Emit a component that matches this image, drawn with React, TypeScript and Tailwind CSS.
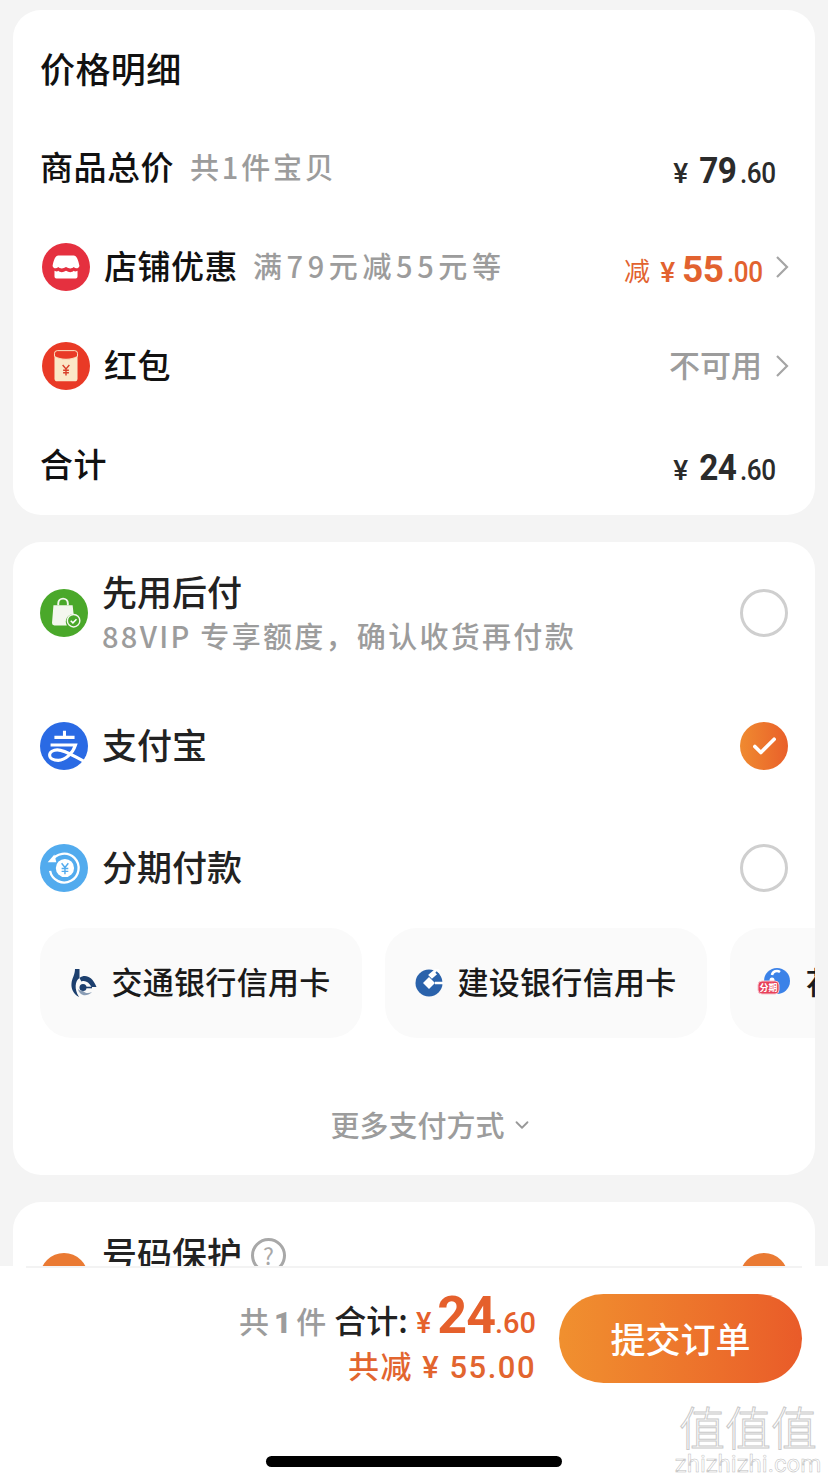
import React from 'react'
import { ChevronDown, Check } from 'lucide-react'

const cjk = "font-['Noto_Sans_CJK_SC',sans-serif]"
const num = "font-['Roboto','Noto_Sans_CJK_SC',sans-serif]"

function Price({ whole, cents, tone, wide }: { whole: string; cents: string; tone: string; wide?: boolean }) {
  return (
    <span className={`${num} ${tone} flex items-baseline pt-[6px]`}>
      <span className="text-[28px] font-medium mr-[7px]">¥</span>
      <span className={wide ? 'text-[37px] font-bold tracking-[-0.5px] origin-right' : 'text-[37px] font-bold tracking-[-0.5px] scale-x-90 origin-right'}>{whole}</span>
      <span className="text-[29px] font-medium tracking-[-0.5px] scale-x-90 origin-right">.{cents}</span>
    </span>
  )
}

function Chevron() {
  return (
    <svg width="14" height="24" viewBox="0 0 14 24" className="shrink-0">
      <path d="M2 2l10 10L2 22" stroke="#a5a5a5" strokeWidth="2.200" fill="none" />
    </svg>
  )
}

function ShopIcon() {
  return (
    <svg width="48" height="48" viewBox="0 0 50 50" className="shrink-0 ml-[2px]">
      <circle cx="25" cy="25" r="25" fill="#e5303f" />
      <path d="M17 13h16c3 0 5 5 6 11-1 3-4 3-6 1-2 2-5 2-8 0-3 2-6 2-8 0-2 2-5 2-6-1 1-6 3-11 6-11z" fill="#fff" />
      <path d="M13 29c2 1 3 1 4 0 2 2 5 2 8 0 3 2 6 2 8 0 1 1 2 1 4 0v6a2 2 0 0 1-2 2H15a2 2 0 0 1-2-2z" fill="#fff" />
    </svg>
  )
}

function EnvelopeIcon() {
  return (
    <svg width="48" height="48" viewBox="0 0 50 50" className="shrink-0 ml-[2px]">
      <circle cx="25" cy="25" r="25" fill="#e93a26" />
      <rect x="13" y="9" width="24" height="32" rx="3" fill="#fbe7c6" />
      <path d="M13 12a3 3 0 0 1 3-3h18a3 3 0 0 1 3 3v3c-7 4-17 4-24 0z" fill="#e93a26" stroke="#fbe7c6" strokeWidth="1" />
      <path d="M21.500 24l3.500 4 3.500-4M25 28v7M22 29.500h6M22 32h6" stroke="#d8402a" strokeWidth="1.500" fill="none" />
    </svg>
  )
}

function BagIcon() {
  return (
    <svg width="48" height="48" viewBox="0 0 50 50" className="shrink-0">
      <circle cx="25" cy="25" r="25" fill="#4aa82a" />
      <path d="M14 17h20l1 9a8 8 0 0 0-7 12H15a2.500 2.500 0 0 1-2.500-2.500z" fill="#f4f7ee" />
      <path d="M19 17v-2a5 5 0 0 1 10 0v2" stroke="#f4f7ee" strokeWidth="2" fill="none" />
      <circle cx="35" cy="33" r="6.500" fill="#4aa82a" stroke="#f4f7ee" strokeWidth="1.500" />
      <path d="M32 33l2.300 2.300 3.700-3.800" stroke="#fff" strokeWidth="1.600" fill="none" />
    </svg>
  )
}

function AlipayIcon() {
  return (
    <svg width="48" height="48" viewBox="0 0 50 50" className="shrink-0">
      <circle cx="25" cy="25" r="25" fill="#2a6ae4" />
      <path d="M15 16h21M25.500 9v7M11 24h26c-3 9-11 16-18 16-5 0-9-2-9-5.500 0-3.500 4-5.500 8-5.500 8 0 16 6 30 13" stroke="#fff" strokeWidth="3.200" fill="none" />
    </svg>
  )
}

function InstallmentIcon() {
  return (
    <svg width="48" height="48" viewBox="0 0 50 50" className="shrink-0">
      <circle cx="25" cy="25" r="25" fill="#52abee" />
      <path d="M12 18a15 15 0 1 1-1.500 10" stroke="#fff" strokeWidth="2.400" fill="none" />
      <path d="M8 19h9l-2-8z" fill="#fff" />
      <circle cx="26" cy="25" r="9.500" fill="#fff" />
      <path d="M22.500 20l3.500 4.500 3.500-4.500M26 24.500v7M22.500 25.500h7M22.500 28.500h7" stroke="#52abee" strokeWidth="1.500" fill="none" />
    </svg>
  )
}

function CommBankIcon() {
  return (
    <svg width="26" height="30" viewBox="0 0 26 30" className="shrink-0">
      <path d="M4 1h4.500v9C4 13 3 21 8 29 2 26 0 20 .5 15.500 1 10 4 7 4 1z" fill="#1c3f6e" />
      <path d="M8.500 10C14 6 21 8 25.500 19H20.500C18 14 14 12 10.500 13.500 9.500 12 9 11 8.500 10z" fill="#1c3f6e" />
      <circle cx="12" cy="19.500" r="3.500" fill="#1c3f6e" />
      <path d="M14 19.500h7" stroke="#1c3f6e" strokeWidth="1.600" />
      <path d="M7 21c1 6 8 9 14 3-4 2-7 1-9-1-2 0-4-1-5-2z" fill="#8a9db5" />
    </svg>
  )
}

function CcbIcon() {
  return (
    <svg width="28" height="28" viewBox="0 0 28 28" className="shrink-0">
      <circle cx="14" cy="14" r="13.500" fill="#2a62ab" />
      <path d="M14 8l6 6-6 6-6-6z" fill="#fff" />
      <path d="M15 6L22 0l2 2-7 6zM20 14h8" stroke="#fff" strokeWidth="2.500" fill="#fff" />
      <path d="M21 3l3 3" stroke="#2a62ab" strokeWidth="2" />
    </svg>
  )
}

function HuabeiIcon() {
  return (
    <svg width="34" height="32" viewBox="0 0 34 32" className="shrink-0">
      <circle cx="20" cy="14" r="13" fill="#3b82e8" />
      <path d="M15 8a5 5 0 0 1 8-3" stroke="#fff" strokeWidth="2.500" fill="none" />
      <circle cx="15" cy="13" r="2.500" fill="#fff" />
      <rect x="1" y="14" width="21" height="13" rx="4" fill="#e8415a" stroke="#f7c4cc" strokeWidth="1" />
      <text x="11.500" y="24" fontSize="9" fontWeight="700" fill="#fff" textAnchor="middle">分期</text>
    </svg>
  )
}

function Radio({ checked }: { checked?: boolean }) {
  if (checked) {
    return (
      <span className="w-[48px] h-[48px] rounded-full bg-gradient-to-r from-[#ef8a30] to-[#e95f2a] flex items-center justify-center">
        <Check size={29} color="#fff" strokeWidth={3} />
      </span>
    )
  }
  return <span className="w-[48px] h-[48px] rounded-full border-[3px] border-[#cfcfcf]" />
}

function BankChip({ icon, name }: { icon: React.ReactNode; name: string }) {
  return (
    <div className="w-[322px] h-[110px] shrink-0 rounded-[32px] bg-[#fafafa] flex items-center justify-center gap-[14px]">
      {icon}
      <span className="text-[31px] tracking-[0.3px] pb-[3px] font-medium text-[#1a1a1a]">{name}</span>
    </div>
  )
}

export default function App() {
  return (
    <div className={`${cjk} relative w-[828px] h-[1484px] bg-[#f4f4f4] flex flex-col overflow-hidden`}>
      <div className="flex-1 min-h-0 overflow-hidden pt-[10px] px-[13px] flex flex-col gap-[27px]">
        {/* price card */}
        <section className="h-[505px] shrink-0 bg-white rounded-[28px] pl-[27px] pr-[26px] pt-[10px] flex flex-col">
          <h2 className="h-[100px] flex items-center pb-[4px] text-[35px] tracking-[0.4px] font-medium text-[#111]">价格明细</h2>
          <div className="h-[97px] flex items-center justify-between pr-[13px]">
            <div className="flex items-center gap-[16px] pb-[3px]">
              <span className="text-[33px] tracking-[0.5px] font-medium text-[#111]">商品总价</span>
              <span className="text-[29px] tracking-[2.800px] font-medium text-[#9c9c9c]">共1件宝贝</span>
            </div>
            <Price whole="79" cents="60" tone="text-[#2b2b2b]" />
          </div>
          <div className="h-[100px] flex items-center justify-between">
            <div className="flex items-center">
              <ShopIcon />
              <span className="ml-[14px] pb-[2px] text-[33px] tracking-[0.5px] font-medium text-[#111]">店铺优惠</span>
              <span className="ml-[15px] pb-[2px] text-[29px] tracking-[4.600px] font-medium text-[#9c9c9c]">满79元减55元等</span>
            </div>
            <div className="flex items-center">
              <span className="text-[26px] text-[#e2622f] mr-[10px] pt-[6px]">减</span>
              <Price whole="55" cents="00" tone="text-[#e2622f]" wide />
              <span className="ml-[12px]"><Chevron /></span>
            </div>
          </div>
          <div className="h-[99px] flex items-center justify-between">
            <div className="flex items-center">
              <EnvelopeIcon />
              <span className="ml-[14px] pb-[2px] text-[33px] tracking-[0.5px] font-medium text-[#111]">红包</span>
            </div>
            <div className="flex items-center">
              <span className="text-[31px] pb-[3px] font-medium text-[#9c9c9c]">不可用</span>
              <span className="ml-[13px]"><Chevron /></span>
            </div>
          </div>
          <div className="h-[100px] flex items-center justify-between pr-[13px]">
            <span className="pb-[2px] text-[33px] tracking-[0.5px] font-medium text-[#111]">合计</span>
            <Price whole="24" cents="60" tone="text-[#2b2b2b]" />
          </div>
        </section>

        {/* payment card */}
        <section className="h-[633px] shrink-0 bg-white rounded-[28px] flex flex-col pl-[27px] overflow-hidden">
          <div className="h-[142px] shrink-0 flex items-center justify-between pr-[27px]">
            <div className="flex items-center gap-[14px]">
              <BagIcon />
              <div className="flex flex-col pb-[1px]">
                <span className="text-[35px] leading-[42px] font-medium text-[#222]">先用后付</span>
                <span className="mt-[3px] text-[29px] leading-[40px] tracking-[2.300px] font-medium text-[#9c9c9c]">88VIP 专享额度，确认收货再付款</span>
              </div>
            </div>
            <Radio />
          </div>
          <div className="h-[124px] shrink-0 flex items-center justify-between pr-[27px]">
            <div className="flex items-center gap-[14px]">
              <AlipayIcon />
              <span className="text-[35px] pb-[4px] font-medium text-[#222]">支付宝</span>
            </div>
            <Radio checked />
          </div>
          <div className="h-[120px] shrink-0 flex items-center justify-between pr-[27px]">
            <div className="flex items-center gap-[14px]">
              <InstallmentIcon />
              <span className="text-[35px] pb-[4px] font-medium text-[#222]">分期付款</span>
            </div>
            <Radio />
          </div>
          <div className="flex gap-[23px] shrink-0">
            <BankChip icon={<CommBankIcon />} name="交通银行信用卡" />
            <BankChip icon={<CcbIcon />} name="建设银行信用卡" />
            <BankChip icon={<HuabeiIcon />} name="花呗分期信用卡" />
          </div>
          <div className="flex-1 flex items-center justify-center pt-[36px] pl-[8px] text-[29px] font-medium text-[#9c9c9c]">
            更多支付方式
            <ChevronDown size={22} color="#999" strokeWidth={2} className="ml-[6px]" />
          </div>
        </section>

        {/* number protection, cut off by the footer */}
        <section className="h-[200px] shrink-0 bg-white rounded-[28px] pl-[27px] pr-[27px] pt-[30px] flex justify-between">
          <div className="flex items-start gap-[14px]">
            <span className="w-[48px] h-[48px] mt-[21px] rounded-full bg-[#ea7a33]" />
            <span className="text-[35px] leading-[42px] font-medium text-[#222]">号码保护</span>
            <span className="w-[35px] h-[35px] mt-[6px] -ml-[5px] rounded-full border-[3px] border-[#a8a8a8] text-[#a8a8a8] text-[23px] leading-[29px] text-center">?</span>
          </div>
          <span className="w-[48px] h-[48px] mt-[21px] rounded-full bg-[#ea7a33]" />
        </section>
      </div>

      {/* footer */}
      <footer className="h-[218px] shrink-0 bg-white flex flex-col">
        <div className="h-[2px] mx-[26px] bg-[#f3f3f3]" />
        <div className="flex justify-end items-start pt-[9px] pr-[26px] gap-[23px]">
          <div className="flex flex-col items-end">
            <div className="flex items-baseline h-[56px]">
              <span className="text-[30px] tracking-[2px] font-medium text-[#9c9c9c]">共<span className={`${num} font-black mx-[3px]`}>1</span>件</span>
              <span className="ml-[6px] text-[32px] font-medium text-[#222]">合计:</span>
              <span className={`${num} ml-[8px] text-[29px] font-medium text-[#e5602c]`}>¥</span>
              <span className={`${num} ml-[6px] text-[52px] font-bold text-[#e5602c] tracking-[-1px]`}>24</span>
              <span className={`${num} text-[29px] font-medium text-[#e5602c]`}>.60</span>
            </div>
            <div className={`${num} mt-[12px] text-[31px] tracking-[1.500px] font-medium text-[#e2652f]`}>共减 ¥ 55.00</div>
          </div>
          <button className="mt-[17px] w-[243px] h-[89px] rounded-full bg-gradient-to-r from-[#f0902f] to-[#e95b29] text-white text-[35px] font-medium">提交订单</button>
        </div>
        <div className="flex-1 flex items-end justify-center pb-[17px]">
          <div className="w-[296px] h-[11px] rounded-full bg-black" />
        </div>
      </footer>

      {/* site watermark */}
      <div className="absolute right-[8px] bottom-[6px] w-[144px] flex flex-col items-center text-white [-webkit-text-stroke:1px_#c9c9c9]">
        <span className="text-[46px] leading-[50px] font-light whitespace-nowrap">值值值</span>
        <span className={`${num} text-[24px] leading-[28px] [-webkit-text-stroke:0.5px_#bdbdbd]`}>zhizhizhi.com</span>
      </div>
    </div>
  )
}
